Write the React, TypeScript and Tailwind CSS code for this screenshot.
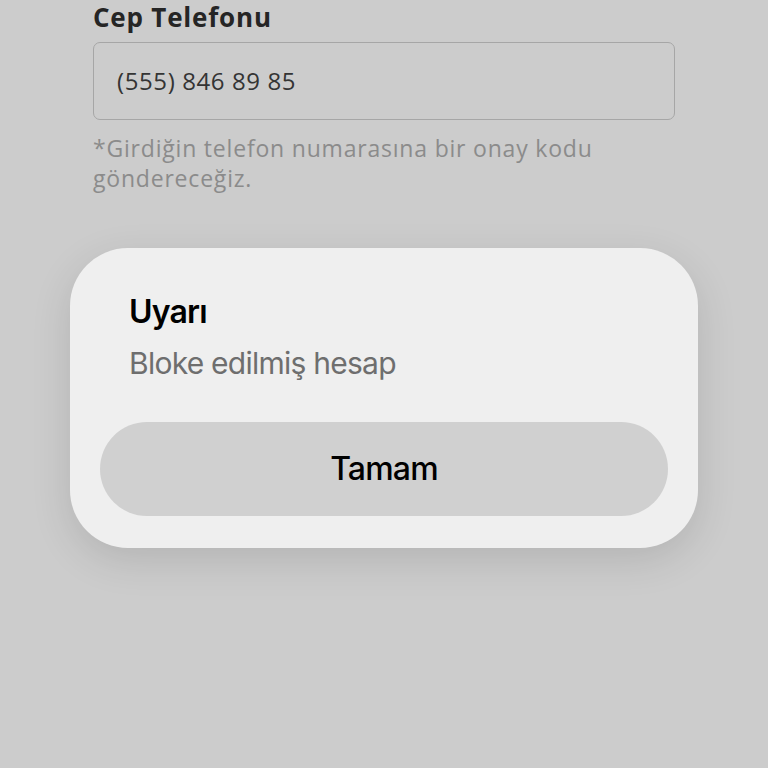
const formFont = { fontFamily: '"Open Sans", "Noto Sans", sans-serif' };
const iosFont = { fontFamily: 'Inter, "Liberation Sans", sans-serif' };

const PhoneField = () => (
    <div className="px-[93px]" style={formFont}>
        <p className="text-[26px] leading-[32px] font-bold text-[#252525] tracking-[0.8px]">
            Cep Telefonu
        </p>
        <div className="mt-[9px] h-[78px] w-[582px] rounded-[7px] border border-[#a6a6a6] flex items-center px-[23px]">
            <span className="text-[24px] text-[#343434] tracking-[0.6px]">(555) 846 89 85</span>
        </div>
        <p className="mt-[13px] text-[23px] leading-[30px] text-[#8b8b8b] tracking-[0.8px] w-[540px]">
            *Girdiğin telefon numarasına bir onay kodu gönderece­ğiz.
        </p>
    </div>
);

const AlertDialog = () => (
    <div className="mt-[55px] mx-[70px] h-[300px] rounded-[58px] bg-[#efefef] shadow-[0_12px_40px_rgba(0,0,0,0.12)] px-[30px] pt-[44px]" style={iosFont}>
        <div className="px-[29px]">
            <p className="text-[32px] leading-[40px] font-semibold text-black tracking-tight">Uyarı</p>
            <p className="mt-[14px] text-[30px] leading-[34px] text-[#6e6e6e] tracking-tight">
                Bloke edilmiş hesap
            </p>
        </div>
        <button className="mt-[42px] w-full h-[94px] rounded-full bg-[#d0d0d0] text-[32px] font-medium text-black tracking-tight">
            Tamam
        </button>
    </div>
);

const App = () => {
    return (
        <div className="w-[768px] h-[768px] bg-[#cccccc] overflow-hidden pt-[1px]">
            <PhoneField />
            <AlertDialog />
        </div>
    );
};

export default App;
